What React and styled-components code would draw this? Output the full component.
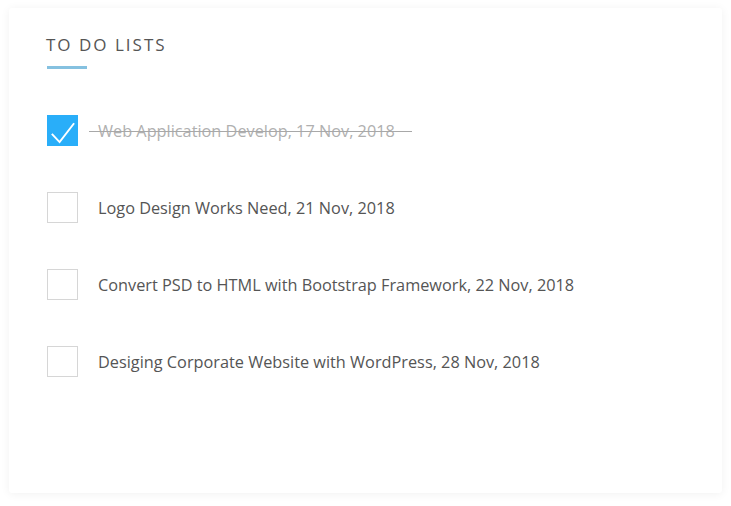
import React, { useState } from "react";
import styled, { createGlobalStyle } from "styled-components";

const Global = createGlobalStyle`
  html, body { margin: 0; padding: 0; background: #fff; }
  body { font-family: "Open Sans", "Noto Sans", sans-serif; }
`;

const Page = styled.div`
  padding: 8px 9px;
`;

const Card = styled.section`
  box-sizing: border-box;
  height: 485px;
  background: #fff;
  border-radius: 3px;
  box-shadow: 0 1px 10px rgba(0, 0, 0, 0.06);
  padding: 25px 37px 0 37px;
`;

const Title = styled.h2`
  margin: 0;
  font-size: 17px;
  font-weight: 400;
  letter-spacing: 2px;
  color: #555;
  line-height: 24px;
`;

const Underline = styled.div`
  width: 40px;
  height: 3px;
  margin: 9px 0 0 1px;
  background: #85c1e0;
`;

const List = styled.ul`
  list-style: none;
  margin: 46px 0 0 1px;
  padding: 0;
  display: flex;
  flex-direction: column;
  gap: 46px;
`;

const Row = styled.li`
  display: flex;
  align-items: center;
  height: 31px;
  cursor: pointer;
`;

const Box = styled.span`
  box-sizing: border-box;
  width: 31px;
  height: 31px;
  flex: none;
  display: flex;
  align-items: center;
  justify-content: center;
  background: ${(p) => (p.$checked ? "#29aef9" : "#fff")};
  border: 1px solid ${(p) => (p.$checked ? "#29aef9" : "#d6d6d6")};
`;

const Label = styled.span`
  position: relative;
  margin-left: 11px;
  padding: 0 17px 0 9px;
  font-size: 16.3px;
  line-height: 22px;
  color: ${(p) => (p.$done ? "#b0b0b0" : "#555")};
  &::after {
    content: "";
    display: ${(p) => (p.$done ? "block" : "none")};
    position: absolute;
    left: 0;
    right: 0;
    top: 50%;
    height: 1px;
    background: #a8a8a8;
  }
`;

const Check = () => (
  <svg width="31" height="31" viewBox="0 0 31 31" style={{ marginLeft: -1 }}>
    <polyline
      points="5,19 13,27.5 28,8"
      fill="none"
      stroke="#fff"
      strokeWidth="2"
    />
  </svg>
);

const initial = [
  { text: "Web Application Develop, 17 Nov, 2018", done: true },
  { text: "Logo Design Works Need, 21 Nov, 2018", done: false },
  { text: "Convert PSD to HTML with Bootstrap Framework, 22 Nov, 2018", done: false },
  { text: "Desiging Corporate Website with WordPress, 28 Nov, 2018", done: false },
];

export default function App() {
  const [items, setItems] = useState(initial);
  const toggle = (i) =>
    setItems((arr) => arr.map((it, j) => (j === i ? { ...it, done: !it.done } : it)));
  return (
    <Page>
      <Global />
      <Card>
        <Title>TO DO LISTS</Title>
        <Underline />
        <List>
          {items.map((it, i) => (
            <Row key={i} onClick={() => toggle(i)}>
              <Box $checked={it.done}>{it.done && <Check />}</Box>
              <Label $done={it.done}>{it.text}</Label>
            </Row>
          ))}
        </List>
      </Card>
    </Page>
  );
}
